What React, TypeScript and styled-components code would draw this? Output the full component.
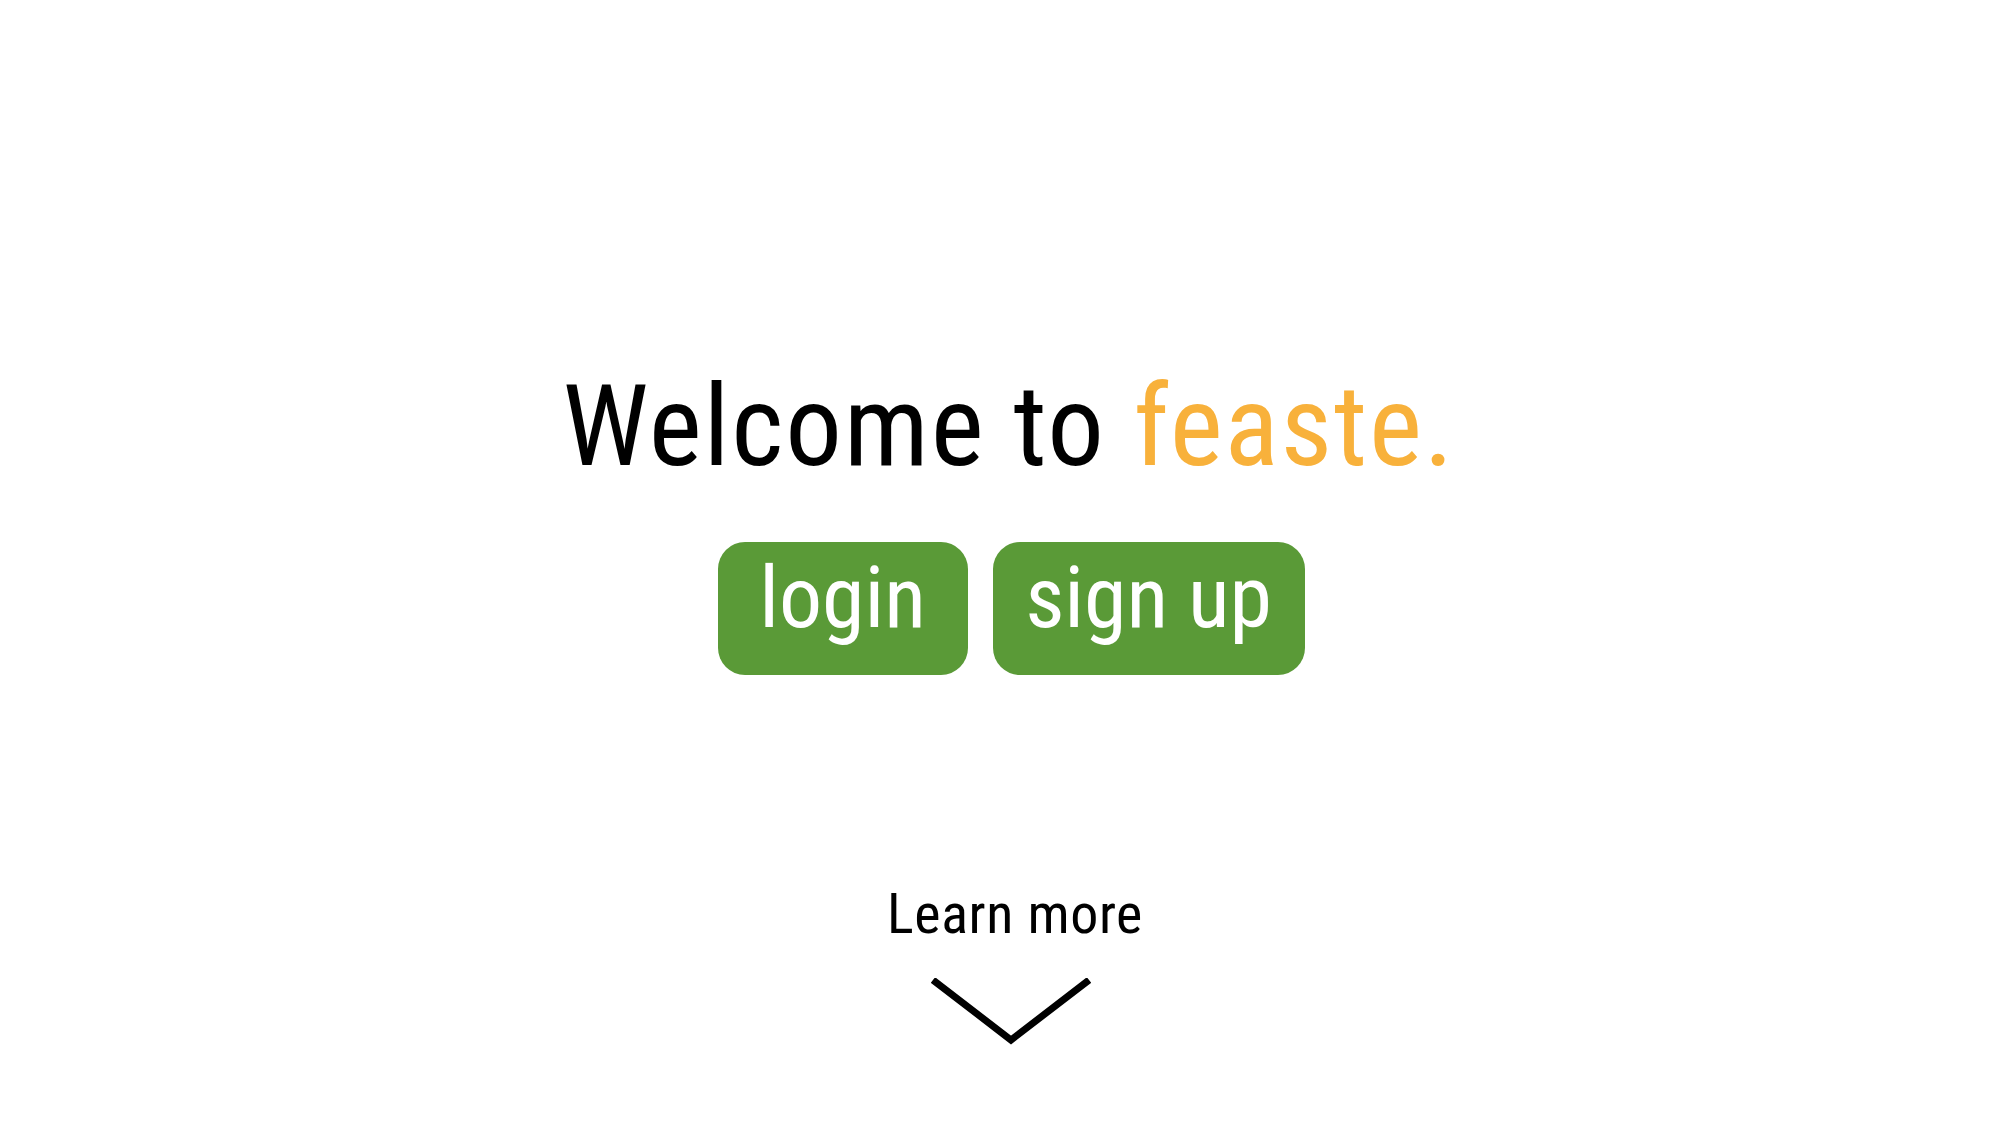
import styled, { createGlobalStyle } from 'styled-components';

const GlobalStyle = createGlobalStyle`
  html, body {
    margin: 0;
    padding: 0;
    background: #ffffff;
  }
  body {
    font-family: "Roboto", "Liberation Sans", sans-serif;
    font-stretch: condensed;
  }
`;

const Page = styled.main`
  min-height: 1132px;
  display: flex;
  flex-direction: column;
  align-items: center;
  padding: 370px 0 0 6px;
  box-sizing: border-box;
`;

const Heading = styled.h1`
  margin: 0;
  font-size: 113px;
  line-height: 1;
  font-weight: 400;
  letter-spacing: 1.8px;
  color: #000000;
`;

const Brand = styled.span`
  color: #f8b13b;
`;

const ButtonRow = styled.div`
  display: flex;
  gap: 25px;
  margin-top: 59px;
  padding-left: 4px;
`;

const PillButton = styled.button<{ $width: number }>`
  width: ${(p) => p.$width}px;
  height: 133px;
  padding: 13px 0 0;
  box-sizing: border-box;
  display: flex;
  justify-content: center;
  align-items: flex-start;
  border: none;
  border-radius: 27px;
  background: #5a9a37;
  color: #ffffff;
  font-family: inherit;
  font-stretch: inherit;
  font-size: 86px;
  line-height: 1;
  cursor: pointer;
`;

const LearnMore = styled.a`
  margin-top: 211px;
  padding-left: 12px;
  font-size: 56px;
  line-height: 1;
  letter-spacing: 0.6px;
  color: #000000;
  text-decoration: none;
`;

const Chevron = styled.svg`
  margin-top: 36px;
  margin-left: 4px;
  display: block;
`;

export default function App() {
  return (
    <>
      <GlobalStyle />
      <Page>
        <Heading>
          Welcome to <Brand>feaste.</Brand>
        </Heading>
        <ButtonRow>
          <PillButton $width={250}>login</PillButton>
          <PillButton $width={312}>sign up</PillButton>
        </ButtonRow>
        <LearnMore href="#">Learn more</LearnMore>
        <Chevron width="160" height="68" viewBox="0 0 160 68">
          <polyline
            points="2,2 80,62 158,2"
            fill="none"
            stroke="#000"
            strokeWidth="7"
          />
        </Chevron>
      </Page>
    </>
  );
}
